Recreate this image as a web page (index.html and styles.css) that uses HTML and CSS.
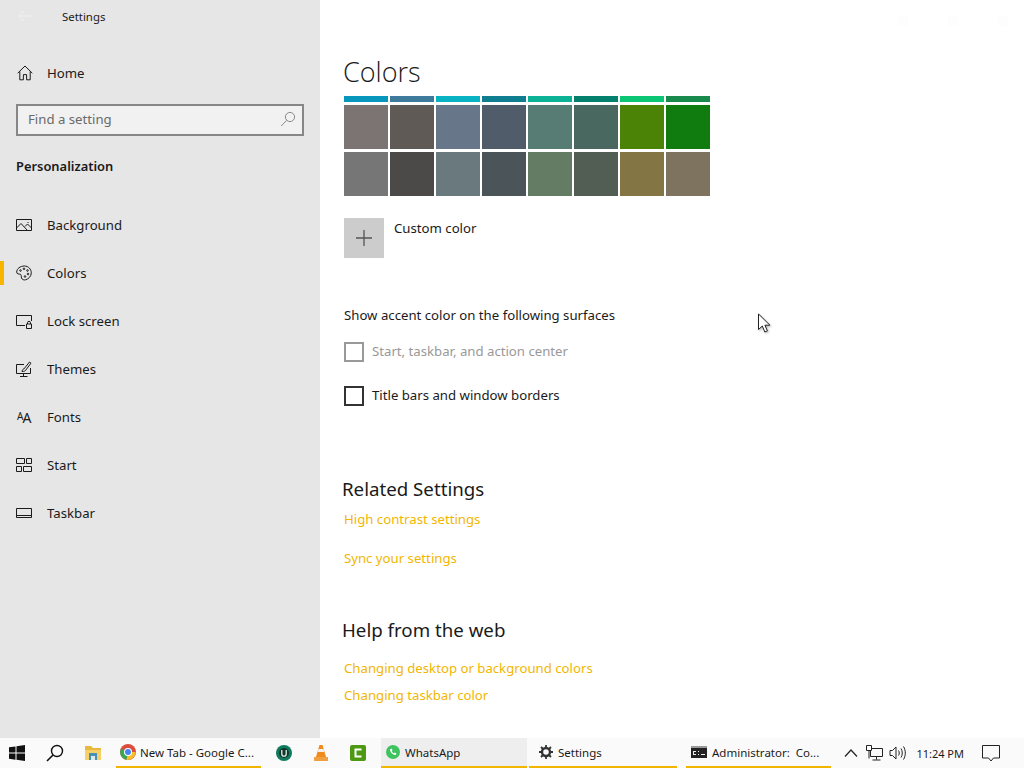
FILE: index.html
```html
<!DOCTYPE html>
<html lang="en">
<head>
    <meta charset="UTF-8">
    <title>Settings</title>
    <link rel="stylesheet" href="styles.css">
</head>
<body>
    <div class="window">
        <div class="sidebar">
            <div class="title-row">
                <svg class="back-arrow" width="16" height="16" viewBox="0 0 16 16"><path d="M2 8h13M7 3 2 8l5 5" fill="none" stroke="#f0f0f0"/></svg>
                <span>Settings</span>
            </div>
            <div class="home-row">
                <svg class="nav-icon" viewBox="0 0 16 16"><path d="M.7 8.2 8 1l7.3 7.2M2.8 6.5v8.3h3.6V9.6h3.2v5.2h3.6V6.5" /></svg>
                <span>Home</span>
            </div>
            <div class="search-box">
                <span>Find a setting</span>
                <svg width="16" height="16" viewBox="0 0 16 16"><circle cx="10" cy="6" r="4.6" fill="none" stroke="#8a8a8a"/><path d="M6.6 9.4 1.2 15" stroke="#8a8a8a" fill="none"/></svg>
            </div>
            <div class="section-title">Personalization</div>
            <div class="nav-list">
                <div class="nav-item">
                    <svg class="nav-icon" viewBox="0 0 16 16"><path d="M.5 2.5h15v11H.5zM.5 11l4.5-4.5 6.5 7M9 9.5l2.5-2.5 4 4M11.5 5.5h1"/></svg>
                    <span>Background</span>
                </div>
                <div class="nav-item active">
                    <svg class="nav-icon" viewBox="0 0 16 16"><path d="M8.5 1C4 1 .7 3.800.7 7c0 2.200 2.300 2 3.600 2.300 1.500.4.600 2.300 1.200 3.700.7 1.700 2.400 2.200 4 1.800 3-.8 5.800-3.500 5.800-7 0-3.600-3-6.800-6.800-6.800z"/><circle cx="4.500" cy="5.500" r=".8"/><circle cx="8" cy="3.800" r=".8"/><circle cx="11.500" cy="5.500" r=".8"/><circle cx="12" cy="9" r=".8"/><circle cx="9" cy="11.500" r=".8"/></svg>
                    <span>Colors</span>
                </div>
                <div class="nav-item">
                    <svg class="nav-icon" viewBox="0 0 16 16"><path d="M9 12.500H.5v-10h15v5.500M10.500 11h5v4.500h-5zM11.500 11V9.800a1.500 1.500 0 0 1 3 0V11"/></svg>
                    <span>Lock screen</span>
                </div>
                <div class="nav-item">
                    <svg class="nav-icon" viewBox="0 0 16 16"><path d="M8 3.500H.5v9h14V7M7.500 12.500v2.500M4 15.500h7.500M6 10.500c.3-1.800 1-2.500 2-2.600L13.500 1 15 2.200 9.800 9c-.3 1-1.800 1.500-3.800 1.500z"/></svg>
                    <span>Themes</span>
                </div>
                <div class="nav-item">
                    <span class="fonts-glyph"><small>A</small>A</span>
                    <span>Fonts</span>
                </div>
                <div class="nav-item">
                    <svg class="nav-icon" viewBox="0 0 16 16"><path d="M.5 1.500h8v5h-8zM10.500 1.500h5v5h-5zM.5 9.500h5v5h-5zM7.500 9.500h8v5h-8z"/></svg>
                    <span>Start</span>
                </div>
                <div class="nav-item">
                    <svg class="nav-icon" viewBox="0 0 16 16"><path d="M.5 3.500h15v9H.5zM.5 10.500h15"/></svg>
                    <span>Taskbar</span>
                </div>
            </div>
        </div>

        <div class="content">
            <div class="window-controls">
                <span></span><span></span><span></span>
            </div>
            <h1>Colors</h1>
            <div class="swatches">
                <div class="s1"></div><div class="s2"></div><div class="s3"></div><div class="s4"></div>
                <div class="s5"></div><div class="s6"></div><div class="s7"></div><div class="s8"></div>
                <div class="s9"></div><div class="s10"></div><div class="s11"></div><div class="s12"></div>
                <div class="s13"></div><div class="s14"></div><div class="s15"></div><div class="s16"></div>
                <div class="s17"></div><div class="s18"></div><div class="s19"></div><div class="s20"></div>
                <div class="s21"></div><div class="s22"></div><div class="s23"></div><div class="s24"></div>
            </div>
            <div class="custom-color">
                <div class="plus-box">
                    <svg width="18" height="18" viewBox="0 0 18 18"><path d="M9 1v16M1 9h16" stroke="#555" stroke-width="1.300"/></svg>
                </div>
                <span>Custom color</span>
            </div>
            <div class="surfaces-label">Show accent color on the following surfaces</div>
            <div class="check-row disabled">
                <div class="check"></div>
                <span>Start, taskbar, and action center</span>
            </div>
            <div class="check-row">
                <div class="check"></div>
                <span>Title bars and window borders</span>
            </div>
            <h2 class="related">Related Settings</h2>
            <a class="link first-link" href="#">High contrast settings</a>
            <a class="link sync-link" href="#">Sync your settings</a>
            <h2 class="help">Help from the web</h2>
            <a class="link help-link" href="#">Changing desktop or background colors</a>
            <a class="link taskbar-link" href="#">Changing taskbar color</a>

            <svg class="cursor" width="15" height="21" viewBox="0 0 15 21"><path d="M1.500 1v15.500l3.800-3.500 2.500 6 2.600-1.100-2.500-5.700h5z" fill="#fff" stroke="#222"/></svg>
        </div>
    </div>

    <div class="taskbar">
        <div class="tb-start">
            <svg width="16" height="16" viewBox="0 0 16 16"><path d="M0 2.300 6.500 1.400v6.200H0zM7.500 1.200 16 0v7.600H7.500zM0 8.500h6.500v6.200L0 13.700zM7.500 8.500H16V16l-8.500-1.200z" fill="#111"/></svg>
        </div>
        <div class="tb-icon">
            <svg width="18" height="18" viewBox="0 0 18 18"><circle cx="11" cy="7" r="5.500" fill="none" stroke="#111" stroke-width="1.400"/><path d="M7 11 1 17" stroke="#111" stroke-width="1.600"/></svg>
        </div>
        <div class="tb-icon">
            <svg width="16" height="16" viewBox="0 0 16 16"><path d="M0 1h6l2 2h8v3H0z" fill="#e8b93c"/><path d="M0 5h16v10H0z" fill="#f5d167"/><path d="M4 8h8v7H4z" fill="#4a8fb5"/><path d="M6 11h4v4H6z" fill="#dfe8ee"/></svg>
        </div>
        <div class="tb-app chrome-app running">
            <svg width="16" height="16" viewBox="0 0 16 16"><circle cx="8" cy="8" r="8" fill="#dd4b3e"/><path d="M8 8 1 4.500A8 8 0 0 0 6.500 15.900z" fill="#3aa757"/><path d="M8 8h7.600A8 8 0 0 1 6.500 15.900z" fill="#f6c026"/><circle cx="8" cy="8" r="4" fill="#fff"/><circle cx="8" cy="8" r="3" fill="#4285f4"/></svg>
            <span>New Tab - Google C...</span>
        </div>
        <div class="tb-pin first-pin">
            <svg width="16" height="16" viewBox="0 0 16 16"><circle cx="8" cy="8" r="8" fill="#0f7a5c"/><circle cx="8" cy="8" r="5" fill="#12352c"/><path d="M5.800 5v4a2.200 2.200 0 0 0 4.400 0V5" fill="none" stroke="#dff2e8" stroke-width="1.300"/></svg>
        </div>
        <div class="tb-pin">
            <svg width="16" height="18" viewBox="0 0 16 18"><path d="M6.500 1h3l3.500 12H3z" fill="#f08a1d"/><path d="M5.500 5h5l.8 3H4.700z" fill="#f4f0e8"/><path d="M1 13h14v4H1z" fill="#f0a040"/></svg>
        </div>
        <div class="tb-pin">
            <svg width="16" height="16" viewBox="0 0 16 16"><rect width="16" height="16" rx="2" fill="#4d9a12"/><path d="M11.500 4.500h-6v7h6" fill="none" stroke="#fff" stroke-width="2"/></svg>
        </div>
        <div class="tb-app whatsapp-app running">
            <svg width="14" height="14" viewBox="0 0 14 14"><circle cx="7" cy="7" r="7" fill="#3fc35f"/><path d="M4 4.200c0 3 2.500 5.500 5.700 5.800l.8-1.500-1.800-.9-.7.700C7 7.900 6.200 7.100 5.800 6l.7-.7-.9-1.800z" fill="#fff"/></svg>
            <span>WhatsApp</span>
        </div>
        <div class="tb-app settings-app running">
            <svg width="14" height="14" viewBox="0 0 14 14"><circle cx="7" cy="7" r="4" fill="none" stroke="#333" stroke-width="2.400"/><path d="M7 0v3M7 11v3M0 7h3M11 7h3M2 2l2 2M10 10l2 2M12 2l-2 2M4 10l-2 2" stroke="#333" stroke-width="1.800"/></svg>
            <span>Settings</span>
        </div>
        <div class="tb-app admin-app running">
            <svg width="16" height="14" viewBox="0 0 16 14"><path d="M0 1h16v12H0z" fill="#222"/><path d="M0 1h16v2H0z" fill="#9a9a9a"/><path d="M2 6h3v1H3v2h2v1H2zM7 6h1v1H7zM7 9h1v1H7zM10 9h4v1h-4z" fill="#eee"/></svg>
            <span>Administrator:&nbsp; Co...</span>
        </div>
        <div class="tray">
            <svg class="tray-chevron" width="14" height="8" viewBox="0 0 14 8"><path d="M1 7.500 7 1l6 6.500" fill="none" stroke="#222" stroke-width="1.200"/></svg>
            <svg class="tray-network" width="17" height="16" viewBox="0 0 17 16"><path d="M4.500 3.500h12v8h-12zM10.500 11.500v3M6.500 15h8" fill="none" stroke="#222"/><path d="M.5.500h5v5h-5z" fill="#fff" stroke="#222"/><path d="M3 5.500v8" stroke="#222"/></svg>
            <svg class="tray-volume" width="17" height="16" viewBox="0 0 17 16"><path d="M1 5.500h2.500L7 2v12l-3.500-3.500H1z" fill="none" stroke="#222"/><path d="M9.500 5.500c1 1.500 1 3.500 0 5M12 3.500c1.700 2.700 1.700 6.300 0 9M14.500 1.500c2.400 4 2.400 9 0 13" fill="none" stroke="#222"/></svg>
            <span class="clock">11:24 PM</span>
            <svg class="tray-notify" width="18" height="17" viewBox="0 0 18 17"><path d="M.5.500h17v12.500h-6L9 16l-2.500-3H.5z" fill="none" stroke="#222"/></svg>
        </div>
    </div>
</body>
</html>
```

FILE: styles.css
```css
* {
    box-sizing: border-box;
}
html, body {
    margin: 0;
    padding: 0;
    height: 768px;
    overflow: hidden;
}
body {
    font-family: "Noto Sans", sans-serif;
    font-size: 13.2px;
    color: #1a1a1a;
    background: #fff;
    display: flex;
    flex-direction: column;
}
.window {
    display: flex;
    height: 738px;
}

/* left pane */
.sidebar {
    width: 320px;
    background: #e6e6e6;
    flex-shrink: 0;
}
.title-row {
    height: 32px;
    display: flex;
    align-items: center;
    padding-left: 17px;
    font-size: 11.4px;
}
.title-row span {
    margin-left: 29px;
}
.home-row {
    height: 48px;
    margin-top: 17px;
    display: flex;
    align-items: center;
    padding-left: 17px;
    padding-bottom: 1px;
}
.home-row span {
    margin-left: 14px;
}
.nav-item span:last-child {
    margin-left: 15px;
}
.nav-icon {
    width: 16px;
    height: 16px;
    fill: none;
    stroke: #1a1a1a;
    stroke-width: 1;
    flex-shrink: 0;
}
.search-box {
    width: 288px;
    height: 32px;
    margin: 7px 0 0 16px;
    border: 2px solid #868686;
    background: #f1f1f1;
    color: #6a6a6a;
    display: flex;
    align-items: center;
    justify-content: space-between;
    padding: 0 6px 2px 10px;
}
.section-title {
    font-size: 12.9px;
    font-weight: 600;
    margin: 14px 0 0 16px;
    height: 32px;
    line-height: 32px;
}
.nav-list {
    margin-top: 19px;
}
.nav-item {
    height: 48px;
    display: flex;
    align-items: center;
    padding-left: 16px;
    position: relative;
}
.nav-item.active::before {
    content: "";
    position: absolute;
    left: 0;
    top: 12px;
    width: 4px;
    height: 24px;
    background: #f7b500;
}
.fonts-glyph {
    width: 16px;
    font-size: 14px;
    line-height: 16px;
    white-space: nowrap;
    letter-spacing: -1px;
    margin-left: 1px;
    margin-right: -1px;
}
.fonts-glyph small {
    font-size: 10px;
    vertical-align: 3px;
}

/* right pane */
.content {
    flex: 1;
    padding-left: 24px;
    position: relative;
}
.window-controls {
    position: absolute;
    top: 16px;
    right: 16px;
    display: flex;
    gap: 40px;
}
.window-controls span {
    width: 10px;
    height: 10px;
    background: #fdfdfd;
}
h1 {
    font-family: "Open Sans", sans-serif;
    font-size: 27px;
    font-weight: 300;
    line-height: 40px;
    margin: 52px 0 0 -1px;
}
h2 {
    font-size: 18.7px;
    font-weight: 400;
    line-height: 28px;
    margin: 0 0 0 -2px;
}
.swatches {
    display: grid;
    grid-template-columns: repeat(8, 44px);
    grid-template-rows: 6px 44px 44px;
    gap: 3px 2px;
    margin-top: 4px;
}
.s1 { background: #0797bd; }
.s2 { background: #3d7a9c; }
.s3 { background: #08b3c4; }
.s4 { background: #0e7e90; }
.s5 { background: #0cb296; }
.s6 { background: #04806f; }
.s7 { background: #0ac674; }
.s8 { background: #188a4c; }
.s9 { background: #7c7472; }
.s10 { background: #5f5a55; }
.s11 { background: #68768a; }
.s12 { background: #515c6b; }
.s13 { background: #567c73; }
.s14 { background: #486860; }
.s15 { background: #4a8305; }
.s16 { background: #107c10; }
.s17 { background: #767676; }
.s18 { background: #4c4a48; }
.s19 { background: #69797e; }
.s20 { background: #4a5459; }
.s21 { background: #647c64; }
.s22 { background: #525e54; }
.s23 { background: #847545; }
.s24 { background: #7e735f; }
.custom-color {
    display: flex;
    margin-top: 22px;
}
.custom-color span {
    margin-left: 10px;
    line-height: 20px;
}
.plus-box {
    width: 40px;
    height: 40px;
    background: #cccccc;
    display: flex;
    align-items: center;
    justify-content: center;
}
.surfaces-label {
    line-height: 20px;
    margin-top: 47px;
}
.check-row {
    display: flex;
    align-items: center;
    gap: 8px;
    height: 20px;
    margin-top: 17px;
}
.check-row + .check-row {
    margin-top: 24px;
}
.check-row span {
    margin-bottom: 2px;
}
.check {
    width: 20px;
    height: 20px;
    border: 2px solid #333;
}
.disabled {
    color: #999;
}
.disabled .check {
    border-color: #999;
}
.related {
    margin-top: 69px;
}
.link {
    display: block;
    color: #f2b600;
    text-decoration: none;
    line-height: 20px;
}
.first-link {
    margin-top: 6px;
}
.sync-link {
    margin-top: 19px;
}
.help {
    margin-top: 48px;
}
.help-link {
    margin-top: 14px;
}
.taskbar-link {
    margin-top: 7px;
}
.cursor {
    position: absolute;
    left: 437px;
    top: 313px;
    filter: drop-shadow(1px 1px 1px rgba(0,0,0,0.3));
}

/* taskbar */
.taskbar {
    height: 30px;
    display: flex;
    align-items: center;
    background: #fafafa;
    font-size: 11.5px;
    color: #1a1a1a;
}
.tb-start {
    width: 36px;
    height: 30px;
    display: flex;
    align-items: center;
    justify-content: center;
    padding-right: 2px;
}
.tb-icon {
    width: 38px;
    height: 30px;
    display: flex;
    align-items: center;
    justify-content: center;
}
.tb-pin {
    width: 37px;
    height: 30px;
    display: flex;
    align-items: center;
    justify-content: center;
}
.first-pin {
    margin-left: 4px;
}
.tb-app {
    height: 30px;
    display: flex;
    align-items: center;
    gap: 5px;
    white-space: nowrap;
    padding-left: 4px;
}
.running {
    border-bottom: 2px solid #f2b600;
}
.chrome-app {
    width: 145px;
    margin-left: 4px;
    gap: 4px;
}
.whatsapp-app {
    width: 146px;
    margin-left: 5px;
    padding-left: 5px;
    background: #eeeeee;
}
.settings-app {
    width: 148px;
    margin-left: 2px;
    padding-left: 10px;
}
.admin-app {
    width: 145px;
    margin-left: 9px;
    padding-left: 5px;
}
.tray {
    margin-left: auto;
    display: flex;
    align-items: center;
    height: 30px;
    padding-right: 24px;
}
.tray-network {
    margin-left: 8px;
}
.tray-volume {
    margin-left: 6px;
}
.clock {
    margin-left: 10px;
    font-size: 11px;
}
.tray-notify {
    margin-left: 18px;
}
```
